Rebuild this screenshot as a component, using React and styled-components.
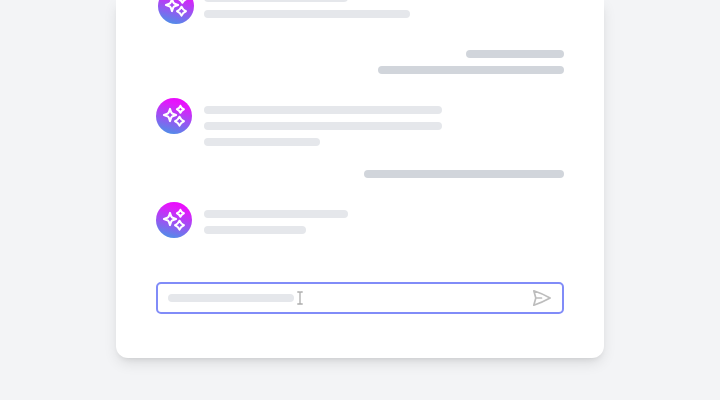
import React from 'react';
import styled, { createGlobalStyle } from 'styled-components';

const GlobalStyle = createGlobalStyle`
  * { box-sizing: border-box; }
  body { margin: 0; background: #f3f4f6; }
`;

const Page = styled.main`
  height: 400px;
  display: flex;
  justify-content: center;
  align-items: flex-start;
  overflow: hidden;
  background: #f3f4f6;
`;

const Card = styled.section`
  width: 488px;
  height: 358px;
  padding: 0 40px 44px;
  display: flex;
  flex-direction: column;
  justify-content: flex-end;
  flex-shrink: 0;
  background: #fff;
  border-radius: 0 0 12px 12px;
  box-shadow: 0 6px 14px -1px rgba(0, 0, 0, 0.1), 0 4px 6px -4px rgba(0, 0, 0, 0.12);
`;

const Reply = styled.article`
  display: flex;
  flex-shrink: 0;
  align-items: flex-start;
  gap: ${(p) => (p.$indent ? 10 : 12)}px;
  padding-left: ${(p) => p.$indent || 0}px;
  margin-bottom: ${(p) => p.$after}px;
`;

const Lines = styled.div`
  display: flex;
  flex-direction: column;
  gap: 8px;
  padding-top: ${(p) => p.$top ?? 8}px;
`;

const Prompt = styled.article`
  display: flex;
  flex-shrink: 0;
  flex-direction: column;
  align-items: flex-end;
  gap: 8px;
  margin-bottom: ${(p) => p.$after}px;
`;

const Line = styled.div`
  width: ${(p) => p.$width}px;
  height: 8px;
  flex-shrink: 0;
  border-radius: 4px;
  background: ${(p) => (p.$dark ? '#d1d5db' : '#e5e7eb')};
`;

const Avatar = styled.div`
  width: 36px;
  height: 36px;
  flex-shrink: 0;
  display: grid;
  place-items: center;
  border-radius: 50%;
  background: linear-gradient(15deg, #3f9be6 0%, #a24df3 46%, #e418fb 78%, #f000ff 100%);
`;

const Composer = styled.div`
  height: 32px;
  flex-shrink: 0;
  display: flex;
  align-items: center;
  padding: 0 10px;
  border: 2px solid #818cf8;
  border-radius: 5px;
`;

const Cursor = styled.svg`
  width: 8px;
  height: 16px;
  margin-left: 2px;
`;

const SendIcon = styled.svg`
  width: 20px;
  height: 20px;
  margin-left: auto;
`;

function Sparkles() {
  return (
    <Avatar>
      <svg width="24" height="24" viewBox="0 0 24 24" fill="none" stroke="#fff" strokeWidth="2" strokeLinejoin="round">
        <path d="M8 4.9 L9.2 8.3 Q9.7 9.3 10.7 9.8 L14.1 11 L10.7 12.2 Q9.7 12.7 9.2 13.7 L8 17.1 L6.8 13.7 Q6.3 12.7 5.3 12.2 L1.9 11 L5.3 9.8 Q6.3 9.3 6.8 8.3Z" />
        <path d="M18.4 1.8 Q19.4 4.3 21.9 5.3 Q19.4 6.3 18.4 8.8 Q17.4 6.3 14.9 5.3 Q17.4 4.3 18.4 1.8Z" />
        <path d="M17.5 12.7 Q18.8 15.9 22 17.2 Q18.8 18.5 17.5 21.7 Q16.2 18.5 13 17.2 Q16.2 15.9 17.5 12.7Z" />
      </svg>
    </Avatar>
  );
}

export default function App() {
  return (
    <>
      <GlobalStyle />
      <Page>
        <Card>
          <Reply $indent={2} $after={26}>
            <Sparkles />
            <Lines $top={6}><Line $width={144} /><Line $width={206} /></Lines>
          </Reply>
          <Prompt $after={24}>
            <Line $dark $width={98} />
            <Line $dark $width={186} />
          </Prompt>
          <Reply $after={24}>
            <Sparkles />
            <Lines><Line $width={238} /><Line $width={238} /><Line $width={116} /></Lines>
          </Reply>
          <Prompt $after={24}><Line $dark $width={200} /></Prompt>
          <Reply $after={44}>
            <Sparkles />
            <Lines><Line $width={144} /><Line $width={102} /></Lines>
          </Reply>
          <Composer>
            <Line $width={126} />
            <Cursor viewBox="0 0 8 16" fill="none" stroke="#adadad" strokeWidth="1.3">
              <path d="M1.3 2H3.2L4 2.5 4.8 2H6.7M4 2.5V13.5M1.3 14H3.2L4 13.5 4.8 14H6.7" />
            </Cursor>
            <SendIcon viewBox="0 0 20 20" fill="none" stroke="#bdbdbd" strokeWidth="1.7" strokeLinejoin="round" strokeLinecap="round">
              <path d="M3.8 10 1.8 2.8Q10.4 5.7 18.1 10Q10.4 14.3 1.8 17.2L3.8 10H9.5" />
            </SendIcon>
          </Composer>
        </Card>
      </Page>
    </>
  );
}
